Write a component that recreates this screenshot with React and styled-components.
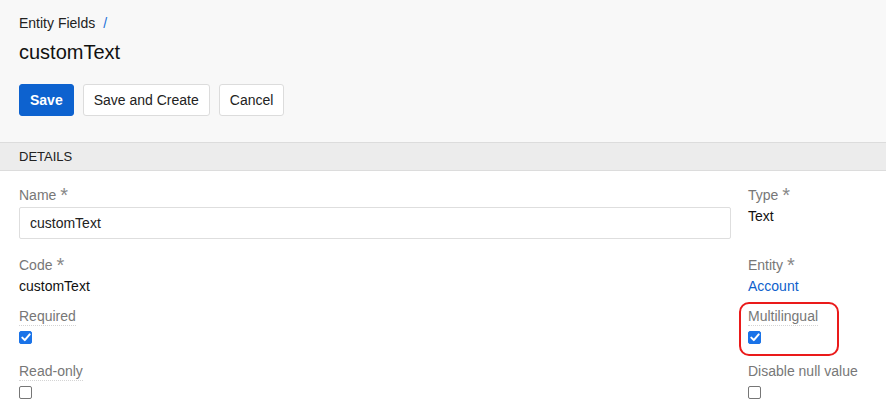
import React from "react";
import styled, { createGlobalStyle } from "styled-components";

const GlobalStyle = createGlobalStyle`
  body {
    margin: 0;
    font-family: "Liberation Sans", Arial, sans-serif;
    font-size: 14px;
    color: #333;
    background: #fff;
  }
`;

const Header = styled.div`
  background: #f8f8f8;
  padding: 13px 19px 26px;
`;

const Breadcrumb = styled.div`
  font-size: 14px;
  line-height: 20px;
  color: #222;

  span {
    color: #1a6fd8;
    margin-left: 8px;
  }
`;

const Title = styled.h1`
  margin: 5px 0 0;
  font-size: 20px;
  font-weight: normal;
  line-height: 28px;
  color: #111;
`;

const Toolbar = styled.div`
  display: flex;
  gap: 9px;
  margin-top: 18px;
`;

const Button = styled.button`
  height: 32px;
  padding: 0 10px;
  font-family: inherit;
  font-size: 14px;
  font-weight: ${(p) => (p.$primary ? "bold" : "normal")};
  color: ${(p) => (p.$primary ? "#fff" : "#222")};
  background: ${(p) => (p.$primary ? "#0d62cf" : "#fff")};
  border: 1px solid ${(p) => (p.$primary ? "#0d62cf" : "#dcdcdc")};
  border-radius: 3px;
`;

const PanelHeading = styled.div`
  background: #ececec;
  border-top: 1px solid #dcdcdc;
  border-bottom: 1px solid #dcdcdc;
  height: 27px;
  line-height: 27px;
  padding: 0 19px;
  font-size: 13px;
  color: #222;
`;

const Body = styled.div`
  display: grid;
  grid-template-columns: 712px 1fr;
  column-gap: 17px;
  row-gap: 10px;
  padding: 12px 19px 0;
`;

const Field = styled.div`
  position: relative;
  ${(p) => (p.$pad ? `padding-bottom: ${p.$pad}px;` : "")}
`;

const Label = styled.div`
  padding-top: ${(p) => (p.$compact ? "0" : "2px")};
  line-height: 20px;
  font-size: 14px;
  color: #777;
  white-space: nowrap;

  b {
    display: inline-block;
    height: 20px;
    font-weight: normal;
    color: #888;
    font-size: 20px;
    line-height: 20px;
    margin-left: 4px;
    vertical-align: top;
  }
`;

const LabelText = styled.span`
  ${(p) => (p.$tip ? "border-bottom: 1px dotted #d4d4d4; padding-bottom: 1px;" : "")}
`;

const Input = styled.input`
  box-sizing: border-box;
  width: 100%;
  height: 32px;
  margin-top: 2px;
  padding: 0 10px;
  border: 1px solid #dedede;
  border-radius: 2px;
  font-family: inherit;
  font-size: 14px;
  color: #222;
  outline: none;
`;

const Value = styled.div`
  padding-top: 1px;
  line-height: 20px;
  font-size: 14px;
  color: ${(p) => (p.$link ? "#0d5fcc" : "#111")};
`;

const CheckRow = styled.div`
  height: 25px;
  box-sizing: border-box;
  padding-top: 5px;
  display: flex;
  align-items: flex-start;
`;

const Box = styled.span`
  box-sizing: border-box;
  width: 13px;
  height: 13px;
  border-radius: 2px;
  display: inline-flex;
  align-items: center;
  justify-content: center;
  background: ${(p) => (p.$checked ? "#1a73e8" : "#fff")};
  border: 1px solid ${(p) => (p.$checked ? "#1a73e8" : "#767676")};
`;

const Highlight = styled.div`
  position: absolute;
  left: -9px;
  top: -4px;
  width: 100px;
  height: 54px;
  box-sizing: border-box;
  border: 2px solid #ea1a1a;
  border-radius: 10px;
  pointer-events: none;
`;

const Checkbox = ({ checked }) => (
  <CheckRow>
    <Box $checked={checked}>
      {checked && (
        <svg width="10" height="9" viewBox="0 0 10 9">
          <path
            d="M1.3 4.6 L3.8 7.1 L8.7 1.4"
            fill="none"
            stroke="#fff"
            strokeWidth="2"
            strokeLinecap="round"
            strokeLinejoin="round"
          />
        </svg>
      )}
    </Box>
  </CheckRow>
);

const FieldLabel = ({ children, required, tip, compact }) => (
  <Label $compact={compact}>
    <LabelText $tip={tip}>{children}</LabelText>
    {required && <b>*</b>}
  </Label>
);

export default function App() {
  return (
    <>
      <GlobalStyle />
      <Header>
        <Breadcrumb>
          Entity Fields<span>/</span>
        </Breadcrumb>
        <Title>customText</Title>
        <Toolbar>
          <Button $primary>Save</Button>
          <Button>Save and Create</Button>
          <Button>Cancel</Button>
        </Toolbar>
      </Header>
      <PanelHeading>DETAILS</PanelHeading>
      <Body>
        <Field $pad={4}>
          <FieldLabel required>Name</FieldLabel>
          <Input defaultValue="customText" />
        </Field>
        <Field>
          <FieldLabel required>Type</FieldLabel>
          <Value>Text</Value>
        </Field>

        <Field>
          <FieldLabel required>Code</FieldLabel>
          <Value>customText</Value>
        </Field>
        <Field>
          <FieldLabel required>Entity</FieldLabel>
          <Value $link>Account</Value>
        </Field>

        <Field>
          <FieldLabel tip compact>Required</FieldLabel>
          <Checkbox checked />
        </Field>
        <Field>
          <FieldLabel tip compact>Multilingual</FieldLabel>
          <Checkbox checked />
          <Highlight />
        </Field>

        <Field>
          <FieldLabel tip compact>Read-only</FieldLabel>
          <Checkbox />
        </Field>
        <Field>
          <FieldLabel compact>Disable null value</FieldLabel>
          <Checkbox />
        </Field>
      </Body>
    </>
  );
}
